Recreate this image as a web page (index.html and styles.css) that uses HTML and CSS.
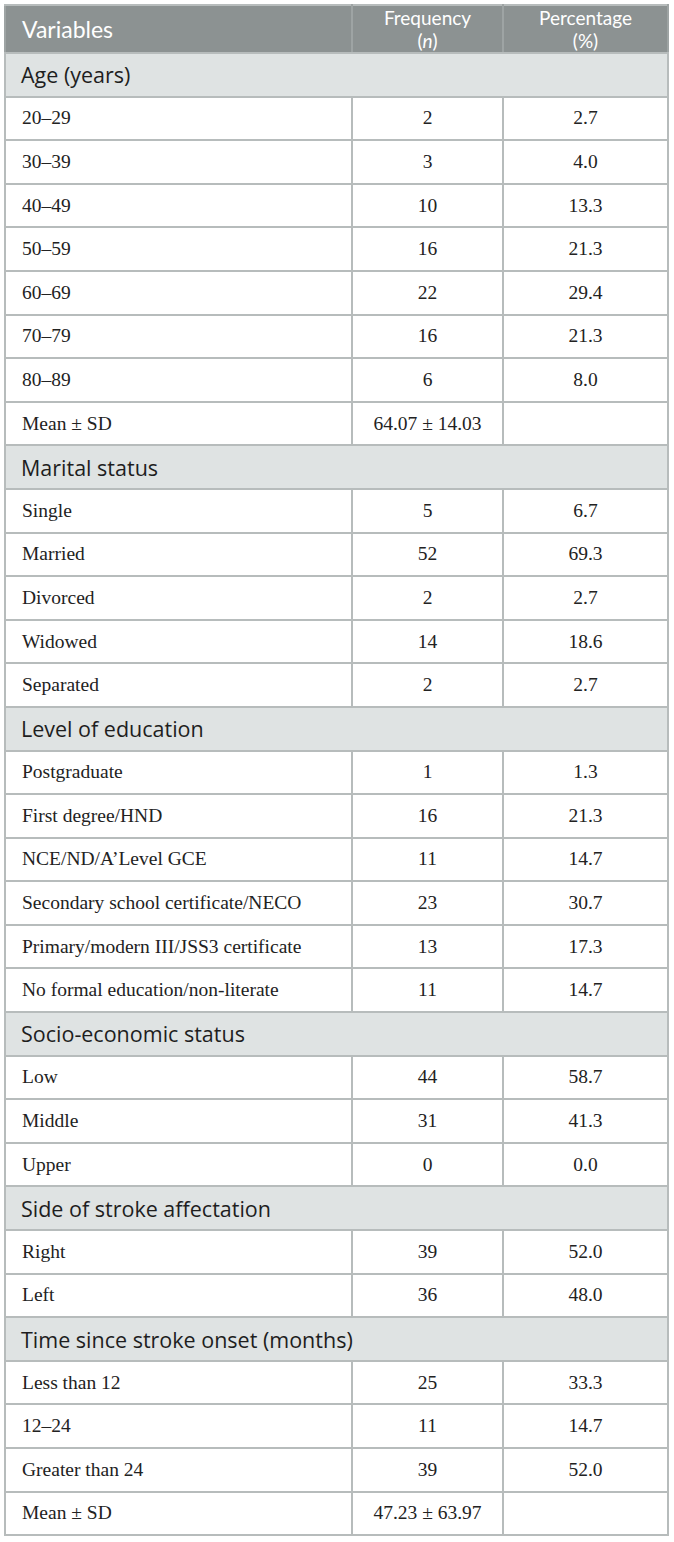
FILE: index.html
```html
<!DOCTYPE html>
<html lang="en">
<head>
    <title>Demographic characteristics</title>
    <meta charset="UTF-8" />
    <link rel="stylesheet" href="styles.css">
</head>
<body>
    <table class="data-table">
        <thead>
            <tr>
                <th class="col-var">Variables</th>
                <th class="col-num">Frequency<br>(<i>n</i>)</th>
                <th class="col-num">Percentage<br>(%)</th>
            </tr>
        </thead>
        <tbody>
            <tr class="section"><td colspan="3">Age (years)</td></tr>
            <tr><td>20–29</td><td>2</td><td>2.7</td></tr>
            <tr><td>30–39</td><td>3</td><td>4.0</td></tr>
            <tr><td>40–49</td><td>10</td><td>13.3</td></tr>
            <tr><td>50–59</td><td>16</td><td>21.3</td></tr>
            <tr><td>60–69</td><td>22</td><td>29.4</td></tr>
            <tr><td>70–79</td><td>16</td><td>21.3</td></tr>
            <tr><td>80–89</td><td>6</td><td>8.0</td></tr>
            <tr><td>Mean ± SD</td><td>64.07 ± 14.03</td><td></td></tr>

            <tr class="section"><td colspan="3">Marital status</td></tr>
            <tr><td>Single</td><td>5</td><td>6.7</td></tr>
            <tr><td>Married</td><td>52</td><td>69.3</td></tr>
            <tr><td>Divorced</td><td>2</td><td>2.7</td></tr>
            <tr><td>Widowed</td><td>14</td><td>18.6</td></tr>
            <tr><td>Separated</td><td>2</td><td>2.7</td></tr>

            <tr class="section"><td colspan="3">Level of education</td></tr>
            <tr><td>Postgraduate</td><td>1</td><td>1.3</td></tr>
            <tr><td>First degree/HND</td><td>16</td><td>21.3</td></tr>
            <tr><td>NCE/ND/A’Level GCE</td><td>11</td><td>14.7</td></tr>
            <tr><td>Secondary school certificate/NECO</td><td>23</td><td>30.7</td></tr>
            <tr><td>Primary/modern III/JSS3 certificate</td><td>13</td><td>17.3</td></tr>
            <tr><td>No formal education/non-literate</td><td>11</td><td>14.7</td></tr>

            <tr class="section"><td colspan="3">Socio-economic status</td></tr>
            <tr><td>Low</td><td>44</td><td>58.7</td></tr>
            <tr><td>Middle</td><td>31</td><td>41.3</td></tr>
            <tr><td>Upper</td><td>0</td><td>0.0</td></tr>

            <tr class="section"><td colspan="3">Side of stroke affectation</td></tr>
            <tr><td>Right</td><td>39</td><td>52.0</td></tr>
            <tr><td>Left</td><td>36</td><td>48.0</td></tr>

            <tr class="section"><td colspan="3">Time since stroke onset (months)</td></tr>
            <tr><td>Less than 12</td><td>25</td><td>33.3</td></tr>
            <tr><td>12–24</td><td>11</td><td>14.7</td></tr>
            <tr><td>Greater than 24</td><td>39</td><td>52.0</td></tr>
            <tr><td>Mean ± SD</td><td>47.23 ± 63.97</td><td></td></tr>
        </tbody>
    </table>
</body>
</html>
```

FILE: styles.css
```css
body {
    margin: 0;
    padding: 4px 5px 6px 4px;
    background: #fff;
}

.data-table {
    width: 665px;
    border-collapse: collapse;
    border: 2px solid #b7bcbc;
    font-family: "Liberation Serif", serif;
    font-size: 19.5px;
    color: #222;
}

.data-table th,
.data-table td {
    height: 43.6px;
    box-sizing: border-box;
    padding: 0 16px;
    border: 2px solid #b7bcbc;
    text-align: center;
    vertical-align: middle;
}

.data-table th {
    height: 47px;
    background: #8c9292;
    color: #fff;
    font-family: Lato, "Open Sans", sans-serif;
    font-weight: normal;
    font-size: 19px;
    line-height: 23px;
    padding-top: 0;
    padding-bottom: 0;
    border-color: #b7bcbc #9ea4a4;
}

.data-table th.col-var {
    font-size: 23px;
    line-height: 28px;
}

.data-table th i {
    font-style: italic;
}

.data-table .col-var {
    width: 347px;
    text-align: left;
}

.data-table .col-num:nth-child(2) {
    width: 151px;
}

.data-table td:first-child {
    text-align: left;
}

.section td {
    background: #dfe3e3;
    font-family: "Open Sans", sans-serif;
    font-size: 21.5px;
    color: #1e1e1e;
    padding-left: 15px;
}
```
